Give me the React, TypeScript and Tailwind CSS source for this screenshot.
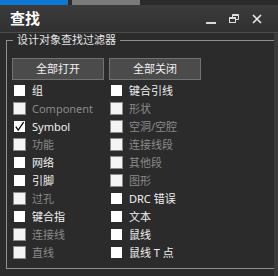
const font = { fontFamily: '"Noto Sans", "Noto Sans CJK SC", sans-serif' };

type Item = { label: string; enabled: boolean; checked?: boolean };

const left: Item[] = [
  { label: "组", enabled: true },
  { label: "Component", enabled: false },
  { label: "Symbol", enabled: true, checked: true },
  { label: "功能", enabled: false },
  { label: "网络", enabled: true },
  { label: "引脚", enabled: true },
  { label: "过孔", enabled: false },
  { label: "键合指", enabled: true },
  { label: "连接线", enabled: false },
  { label: "直线", enabled: false },
];

const right: Item[] = [
  { label: "键合引线", enabled: true },
  { label: "形状", enabled: false },
  { label: "空洞/空腔", enabled: false },
  { label: "连接线段", enabled: false },
  { label: "其他段", enabled: false },
  { label: "图形", enabled: false },
  { label: "DRC 错误", enabled: true },
  { label: "文本", enabled: true },
  { label: "鼠线", enabled: true },
  { label: "鼠线 T 点", enabled: true },
];

function Box({ enabled, checked }: { enabled: boolean; checked?: boolean }) {
  return (
    <div className="w-[13px] h-[13px] flex items-center justify-center shrink-0">
      {enabled ? (
        <div className="w-[11px] h-[11px] bg-white flex items-center justify-center">
          {checked && (
            <svg width="11" height="11" viewBox="0 0 11 11">
              <path d="M1.8 5.6 L4.2 9.2 L9.6 1.2" fill="none" stroke="#000" strokeWidth="1.2" />
            </svg>
          )}
        </div>
      ) : (
        <div className="w-[13px] h-[13px] bg-[#f4f4f4] border border-[#8a8a8a]" />
      )}
    </div>
  );
}

function Row({ item }: { item: Item }) {
  return (
    <div className="h-[18px] flex items-center">
      <Box enabled={item.enabled} checked={item.checked} />
      <span
        className={`ml-[6px] text-[11px] leading-none whitespace-nowrap ${
          item.enabled ? "text-[#f0f0f0]" : "text-[#8a8a8a]"
        }`}
      >
        {item.label}
      </span>
    </div>
  );
}

export default function App() {
  return (
    <div className="w-[278px] h-[276px] bg-[#2b2b2b] flex flex-col overflow-hidden" style={font}>
      <div className="h-[5px] flex shrink-0">
        <div className="w-[68px] bg-[#0a78d4]" />
        <div className="w-[68px] ml-[4px] bg-[#7a7a7a]" />
      </div>
      <div className="h-[27px] shrink-0 flex items-center bg-gradient-to-b from-[#3b3b3b] to-[#313131]">
        <span className="ml-[10px] text-[15px] font-bold text-white leading-none">查找</span>
        <div className="ml-auto flex items-center">
          <svg width="10" height="10" viewBox="0 0 10 10" className="mr-[13px] mt-[2px]">
            <rect x="0" y="7" width="10" height="2" fill="#d8d8d8" />
          </svg>
          <svg width="10" height="9" viewBox="0 0 10 9" className="mr-[13px]">
            <rect x="0.5" y="3.5" width="6" height="5" fill="none" stroke="#e0e0e0" />
            <rect x="0.5" y="3.5" width="6" height="1.5" fill="#e0e0e0" />
            <path d="M3.5 3 V0.5 H9.5 V5.5 H7" fill="none" stroke="#e0e0e0" />
            <rect x="3.5" y="0.5" width="6" height="1.5" fill="#e0e0e0" />
          </svg>
          <svg width="10" height="10" viewBox="0 0 10 10" className="mr-[16px]">
            <path d="M1 1 L9 9 M9 1 L1 9" stroke="#ececec" strokeWidth="1.6" />
          </svg>
        </div>
      </div>
      <div className="h-px bg-[#4c4c4c] shrink-0" />
      <div className="flex flex-1">
        <div className="flex-1 pl-[6px] pt-[7px]">
          <div className="relative h-[229px] border-l border-t border-b border-[#8f8f8f] pl-[5px] pt-[17px]">
            <span className="absolute left-[6px] top-[-8px] px-[4px] bg-[#2b2b2b] text-[11px] leading-[14px] text-[#e6e6e6]">
              设计对象查找过滤器
            </span>
            <div className="flex gap-[5px]">
              <button className="w-[92px] h-[22px] bg-[#4b4b4b] border border-[#727272] text-[11px] text-[#f0f0f0]">
                全部打开
              </button>
              <button className="w-[92px] h-[22px] bg-[#4b4b4b] border border-[#727272] text-[11px] text-[#f0f0f0]">
                全部关闭
              </button>
            </div>
            <div className="flex mt-[1px] ml-[1px]">
              <div className="w-[97px] flex flex-col">
                {left.map((it) => (
                  <Row key={it.label} item={it} />
                ))}
              </div>
              <div className="w-[97px] flex flex-col">
                {right.map((it) => (
                  <Row key={it.label} item={it} />
                ))}
              </div>
            </div>
          </div>
        </div>
        <div className="w-[4px] bg-[#3a3a3a]" />
      </div>
    </div>
  );
}
